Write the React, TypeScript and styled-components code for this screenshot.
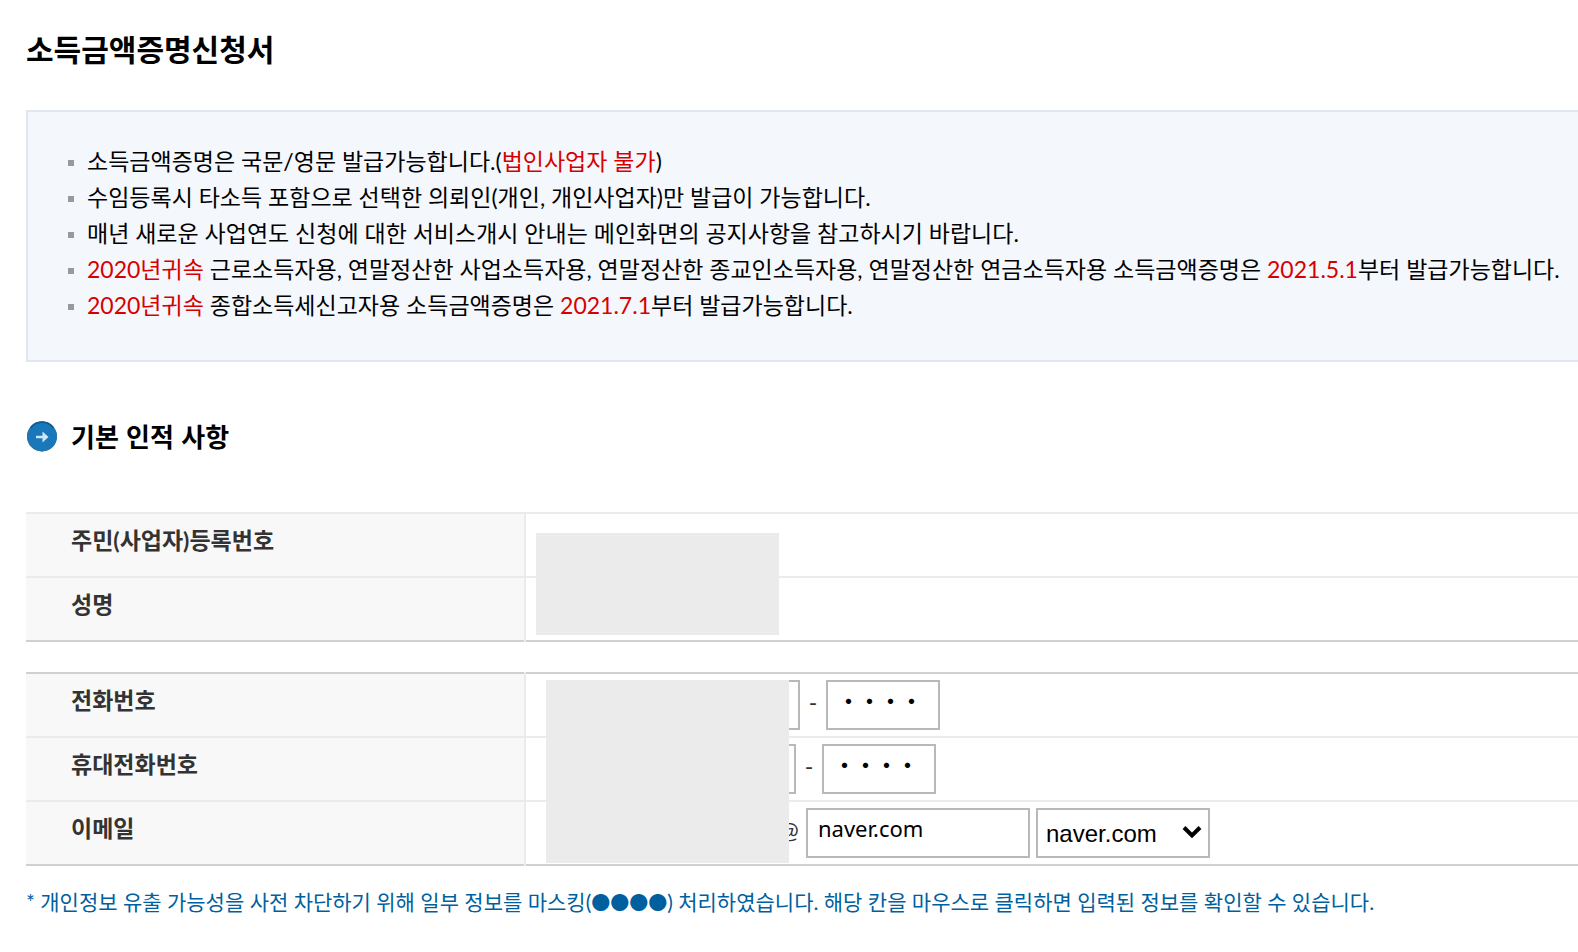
import React from "react";
import styled, { createGlobalStyle } from "styled-components";

const GlobalStyle = createGlobalStyle`
  *, *::before, *::after { box-sizing: border-box; }
  body {
    margin: 0;
    background: #fff;
    color: #000;
    font-family: Lato, "Noto Sans CJK KR", sans-serif;
    font-size: 23px;
    overflow-x: hidden;
  }
`;

const Page = styled.main`
  padding: 27px 0 28px 26px;
`;

const Title = styled.h1`
  height: 44px;
  margin: 0 0 39px;
  font-size: 30px;
  line-height: 44px;
  font-weight: 700;
`;

const Notice = styled.section`
  border: 2px solid #e0e7f0;
  border-right: 0;
  background: #f4f7fc;
  padding: 31px 0 37px 40px;
`;

const NoticeList = styled.ul`
  margin: 0;
  padding: 0;
  list-style: none;
`;

const NoticeItem = styled.li`
  display: flex;
  align-items: center;
  gap: 13px;
  height: 36px;
  line-height: 36px;
  white-space: nowrap;

  &::before {
    content: "";
    flex: none;
    width: 6px;
    height: 6px;
    margin-top: 4px;
    background: #999;
  }
`;

const Red = styled.em`
  font-style: normal;
  color: #d70000;
`;

const SectionTitle = styled.h2`
  display: flex;
  align-items: center;
  gap: 13px;
  height: 40px;
  margin: 54px 0 56px;
  font-family: "Noto Sans CJK KR", sans-serif;
  font-size: 26px;
  line-height: 40px;
  font-weight: 700;
`;

const ArrowIcon = styled.svg`
  width: 32px;
  height: 32px;
  flex: none;
`;

const TableWrap = styled.div`
  position: relative;
  margin-bottom: 30px;
`;

const ContactWrap = styled(TableWrap)`
  margin-bottom: 20px;
`;

const InfoTable = styled.table<{ $topColor: string }>`
  width: 100%;
  table-layout: fixed;
  border-collapse: separate;
  border-spacing: 0;
  border-top: 2px solid ${(p) => p.$topColor};
`;

const Label = styled.th`
  position: relative;
  width: 500px;
  height: 64px;
  padding: 0 0 10px 45px;
  border-bottom: 2px solid #ebebeb;
  background: #f8f8f8;
  color: #333;
  line-height: 32px;
  font-weight: 700;
  text-align: left;

  tr:last-child > & { border-bottom-color: #d0d0d0; }

  &::after {
    content: "";
    position: absolute;
    top: -2px;
    right: 0;
    bottom: -2px;
    width: 2px;
    background: #ebebeb;
  }
`;

const Value = styled.td`
  height: 64px;
  padding: 0 0 0 24px;
  border-bottom: 2px solid #ebebeb;
  color: #333;

  tr:last-child > & { border-bottom-color: #d0d0d0; }
`;

const Fields = styled.div`
  display: flex;
  align-items: center;
`;

const Field = styled.input<{ $width: number }>`
  width: ${(p) => p.$width}px;
  height: 50px;
  padding: 0 10px 10px;
  border: 2px solid #b9b9b9;
  border-radius: 0;
  background: #fff;
  color: #000;
  font: 22px/32px "Noto Sans", "Noto Sans CJK KR", sans-serif;
`;

const DigitField = styled(Field)`
  font: 700 21px/32px "Noto Sans CJK JP", sans-serif;
`;

const Separator = styled.span<{ $width: number }>`
  width: ${(p) => p.$width}px;
  padding-bottom: 6px;
  line-height: 32px;
  text-align: center;
`;

const SelectBox = styled.span<{ $width: number }>`
  position: relative;
  width: ${(p) => p.$width}px;
  height: 50px;

  & > svg {
    position: absolute;
    right: 8px;
    top: 17px;
    width: 20px;
    height: 14px;
    pointer-events: none;
  }
`;

const Select = styled.select`
  appearance: none;
  width: 100%;
  height: 100%;
  padding: 0 30px 0 8px;
  border: 2px solid #b9b9b9;
  border-radius: 0;
  background: #fff;
  color: #000;
  font: 24px "Liberation Sans", Arial, sans-serif;
`;

const DomainSelectSlot = styled.div`
  margin-left: 6px;
  display: flex;
`;

const Mask = styled.div<{ $left: number; $top: number; $height: number }>`
  position: absolute;
  left: ${(p) => p.$left}px;
  top: ${(p) => p.$top}px;
  width: 243px;
  height: ${(p) => p.$height}px;
  background: #ebebeb;
`;

const Footnote = styled.p`
  margin: 0;
  color: #005f9e;
  font-size: 21px;
  line-height: 32px;
  height: 32px;
  white-space: nowrap;
`;

const Circles = styled.span`
  font-family: "Noto Sans CJK KR", sans-serif;
  font-size: 19px;
  line-height: 1;
`;

function Dropdown(props: { id: string; width: number; options: string[]; label: string }) {
  return (
    <SelectBox $width={props.width}>
      <Select id={props.id} aria-label={props.label}>
        {props.options.map((o) => (
          <option key={o}>{o}</option>
        ))}
      </Select>
      <svg viewBox="0 0 20 14" aria-hidden="true">
        <path d="M2 2.5 10 10.5 18 2.5" fill="none" stroke="#000" strokeWidth="4" />
      </svg>
    </SelectBox>
  );
}

function PhoneFields(props: { id: string; name: string; prefixes: string[]; prefixWidth: number }) {
  return (
    <Fields>
      <Dropdown id={props.id} width={props.prefixWidth} options={props.prefixes} label={props.name} />
      <Separator $width={26}>-</Separator>
      <DigitField $width={114} aria-label={`${props.name} 2`} />
      <Separator $width={26}>-</Separator>
      <DigitField $width={114} defaultValue="・・・・" aria-label={`${props.name} 3`} />
    </Fields>
  );
}

export default function App() {
  return (
    <>
      <GlobalStyle />
      <Page lang="ko">
        <Title>소득금액증명신청서</Title>

        <Notice>
          <NoticeList>
            <NoticeItem>
              <span>소득금액증명은 국문/영문 발급가능합니다.(<Red>법인사업자 불가</Red>)</span>
            </NoticeItem>
            <NoticeItem>
              <span>수임등록시 타소득 포함으로 선택한 의뢰인(개인, 개인사업자)만 발급이 가능합니다.</span>
            </NoticeItem>
            <NoticeItem>
              <span>매년 새로운 사업연도 신청에 대한 서비스개시 안내는 메인화면의 공지사항을 참고하시기 바랍니다.</span>
            </NoticeItem>
            <NoticeItem>
              <span>
                <Red>2020년귀속</Red> 근로소득자용, 연말정산한 사업소득자용, 연말정산한 종교인소득자용, 연말정산한 연금소득자용 소득금액증명은 <Red>2021.5.1</Red>부터 발급가능합니다.
              </span>
            </NoticeItem>
            <NoticeItem>
              <span>
                <Red>2020년귀속</Red> 종합소득세신고자용 소득금액증명은 <Red>2021.7.1</Red>부터 발급가능합니다.
              </span>
            </NoticeItem>
          </NoticeList>
        </Notice>

        <SectionTitle>
          <ArrowIcon viewBox="0 0 32 32" aria-hidden="true">
            <circle cx="16" cy="16.500" r="15" fill="#1878bb" />
            <circle cx="16" cy="16.500" r="14.300" fill="none" stroke="#2b74a8" strokeWidth="1.400" />
            <path d="M4.500 8A14.300 14.300 0 0 1 27.500 8" fill="none" stroke="#12598f" strokeWidth="1.800" />
            <path d="M10 17h9" stroke="#cfe6f5" strokeWidth="2.500" fill="none" />
            <path d="M16.500 11.500l6 5.500-6 5.500z" fill="#cfe6f5" />
          </ArrowIcon>
          기본 인적 사항
        </SectionTitle>

        <TableWrap>
          <InfoTable $topColor="#ebebeb">
            <tbody>
              <tr>
                <Label scope="row">주민(사업자)등록번호</Label>
                <Value />
              </tr>
              <tr>
                <Label scope="row">성명</Label>
                <Value />
              </tr>
            </tbody>
          </InfoTable>
          <Mask $left={510} $top={21} $height={102} />
        </TableWrap>

        <ContactWrap>
          <InfoTable $topColor="#d0d0d0">
            <tbody>
              <tr>
                <Label scope="row"><label htmlFor="tel">전화번호</label></Label>
                <Value>
                  <PhoneFields id="tel" name="전화번호" prefixes={["02"]} prefixWidth={110} />
                </Value>
              </tr>
              <tr>
                <Label scope="row"><label htmlFor="mobile">휴대전화번호</label></Label>
                <Value>
                  <PhoneFields id="mobile" name="휴대전화번호" prefixes={["010"]} prefixWidth={106} />
                </Value>
              </tr>
              <tr>
                <Label scope="row"><label htmlFor="email">이메일</label></Label>
                <Value>
                  <Fields>
                    <Field id="email" $width={222} />
                    <Separator $width={34}>@</Separator>
                    <Field $width={224} defaultValue="naver.com" aria-label="이메일 도메인" />
                    <DomainSelectSlot>
                      <Dropdown id="domain" width={174} options={["naver.com"]} label="도메인 선택" />
                    </DomainSelectSlot>
                  </Fields>
                </Value>
              </tr>
            </tbody>
          </InfoTable>
          <Mask $left={520} $top={8} $height={183} />
        </ContactWrap>

        <Footnote>
          * 개인정보 유출 가능성을 사전 차단하기 위해 일부 정보를 마스킹(<Circles>●●●●</Circles>) 처리하였습니다. 해당 칸을 마우스로 클릭하면 입력된 정보를 확인할 수 있습니다.
        </Footnote>
      </Page>
    </>
  );
}
